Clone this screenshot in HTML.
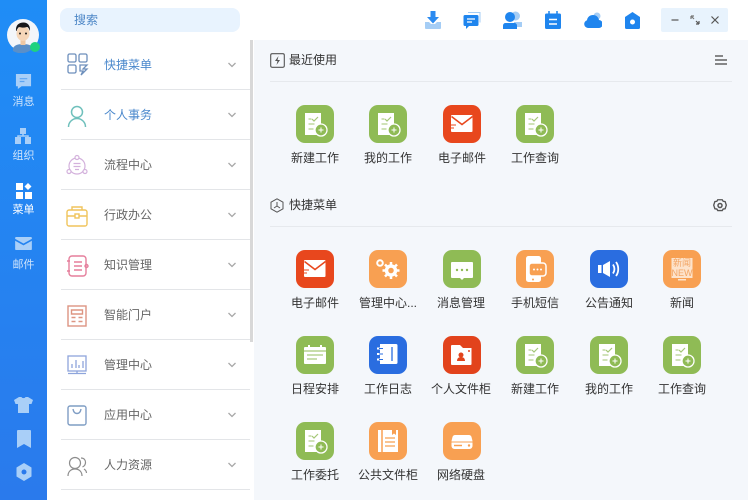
<!DOCTYPE html>
<html lang="zh">
<head>
<meta charset="utf-8">
<title>菜单</title>
<style>
html,body{margin:0;padding:0;width:748px;height:500px;overflow:hidden;background:#fff;}
body{position:relative;font-family:"Liberation Sans","Noto Sans CJK SC",sans-serif;font-size:12px;color:#333;filter:blur(.35px);}
.a{position:absolute;}
.side{left:0;top:0;width:47px;height:500px;background:linear-gradient(180deg,#1f8df6 0%,#2a7aec 100%);}
.sl{position:absolute;left:0;width:47px;text-align:center;font-size:11px;line-height:14px;color:#cfe4fb;}
.search{left:60px;top:8px;width:180px;height:24px;background:#e8f3fe;border-radius:8px;}
.search span{position:absolute;left:14px;top:0;line-height:24px;color:#4c86c6;}
.main{left:254px;top:40px;width:494px;height:460px;background:#f4f7fb;}
.scroll{left:250px;top:40px;width:3px;height:302px;background:#d8d8d8;}
.sep{position:absolute;left:61px;width:189px;height:1px;background:#e3e5e8;}
.mt{position:absolute;left:104px;line-height:18px;color:#666;white-space:nowrap;}
.mt.on{color:#4a88cc;}
.chev{position:absolute;left:227px;width:10px;height:6px;}
.mi{position:absolute;left:65px;width:24px;height:24px;}
.hline{position:absolute;left:270px;width:462px;height:1px;background:#e6e9ed;}
.h{position:absolute;left:289px;line-height:18px;color:#333;white-space:nowrap;}
.t{position:absolute;width:38px;height:38px;}
.l{position:absolute;width:74px;text-align:center;line-height:18px;color:#333;white-space:nowrap;}
.win{left:661px;top:8px;width:67px;height:24px;background:#e8f3fd;border-radius:2px;}
</style>
</head>
<body>
<svg width="0" height="0" style="position:absolute">
<defs>
<symbol id="task" viewBox="0 0 38 38">
<rect width="38" height="38" rx="9" fill="#8fbb55"/>
<path d="M9 8h16v22H9z" fill="#fff"/>
<path d="M12.500 14h3M12.500 19h6M12.500 24h5" stroke="#b4d18e" stroke-width="1.200" fill="none"/>
<path d="M16 14l2 2 4-4" stroke="#a4c776" stroke-width="1.200" fill="none"/>
<circle cx="25" cy="25" r="6" fill="#8fbb55" stroke="#fff" stroke-width="1.300"/>
<path d="M22.500 25h5M25 22.500v5" stroke="#fff" stroke-width="1"/>
</symbol>
<symbol id="mail" viewBox="0 0 38 38">
<rect width="38" height="38" rx="9" fill="#e8471d"/>
<path d="M9 10h19.500a1 1 0 0 1 1 1v15a1 1 0 0 1-1 1H9a1 1 0 0 1-1-1V11a1 1 0 0 1 1-1z" fill="#fff"/>
<path d="M8.500 11.500l10.500 8 10.500-8" stroke="#e8471d" stroke-width="1.500" fill="none"/>
<path d="M8 20h5M8 23h3" stroke="#e8471d" stroke-width="1"/>
</symbol>
<symbol id="gear" viewBox="0 0 38 38">
<rect width="38" height="38" rx="9" fill="#f8a052"/>
<circle cx="11" cy="13" r="2.800" fill="none" stroke="#fff" stroke-width="2"/>
<circle cx="22" cy="20.500" r="4.500" fill="none" stroke="#fff" stroke-width="3.500"/>
<path d="M22 12v3M22 26v3M13.500 20.500h3M27.500 20.500h3M16 14.500l2 2M26 24.500l2 2M16 26.500l2-2M26 16.500l2-2" stroke="#fff" stroke-width="2.500"/>
</symbol>
<symbol id="msg" viewBox="0 0 38 38">
<rect width="38" height="38" rx="9" fill="#8fbb55"/>
<path d="M9 12h20a1 1 0 0 1 1 1v14a1 1 0 0 1-1 1h-8l-2 2-2-2H9a1 1 0 0 1-1-1V13a1 1 0 0 1 1-1z" fill="#fff"/>
<circle cx="14" cy="20" r="1.200" fill="#8fbb55"/><circle cx="19" cy="20" r="1.200" fill="#8fbb55"/><circle cx="24" cy="20" r="1.200" fill="#8fbb55"/>
</symbol>
<symbol id="phone" viewBox="0 0 38 38">
<rect width="38" height="38" rx="9" fill="#f8a052"/>
<rect x="10" y="6" width="15" height="26" rx="2.500" fill="#fff"/>
<rect x="13" y="13" width="17" height="13" rx="3" fill="#f8a052" stroke="#fff" stroke-width="1.500"/>
<circle cx="18" cy="19.500" r="1" fill="#fff"/><circle cx="21.500" cy="19.500" r="1" fill="#fff"/><circle cx="25" cy="19.500" r="1" fill="#fff"/>
<circle cx="17" cy="29.500" r="1" fill="#f8a052"/>
</symbol>
<symbol id="sound" viewBox="0 0 38 38">
<rect width="38" height="38" rx="9" fill="#2a6de0"/>
<path d="M8 15h3.500v8H8zM13 15l7-4v16l-7-4z" fill="#fff"/>
<path d="M23 14.500c1.800 2.800 1.800 6.200 0 9M26 12c3 4 3 10 0 14" stroke="#fff" stroke-width="1.800" fill="none"/>
</symbol>
<symbol id="news" viewBox="0 0 38 38">
<rect width="38" height="38" rx="9" fill="#f8a052"/>
<rect x="8.500" y="8" width="21" height="20" fill="#fde3cb"/>
<path d="M15 29h8v1.500h-8z" fill="#fde3cb"/>
</symbol>
<symbol id="cal" viewBox="0 0 38 38">
<rect width="38" height="38" rx="9" fill="#8fbb55"/>
<path d="M9 11h20a1 1 0 0 1 1 1v15a1 1 0 0 1-1 1H9a1 1 0 0 1-1-1V12a1 1 0 0 1 1-1z" fill="#fff"/>
<path d="M13 9v5M25 9v5" stroke="#fff" stroke-width="2"/>
<path d="M8 15h22" stroke="#8fbb55" stroke-width="1"/>
<path d="M11 19h16M11 23h10" stroke="#a9cb7d" stroke-width="1.200"/>
</symbol>
<symbol id="log" viewBox="0 0 38 38">
<rect width="38" height="38" rx="9" fill="#2a6de0"/>
<path d="M11 8h16a1.500 1.500 0 0 1 1.500 1.500v17A1.500 1.500 0 0 1 27 28H11z" fill="#fff"/>
<path d="M8 12.500h6M8 18h6M8 23.500h6" stroke="#fff" stroke-width="2"/>
<path d="M10 12.500h4M10 18h4M10 23.500h4" stroke="#2a6de0" stroke-width="1"/>
<path d="M23 11v14" stroke="#2a6de0" stroke-width="1.300"/>
</symbol>
<symbol id="folder" viewBox="0 0 38 38">
<rect width="38" height="38" rx="9" fill="#e2431c"/>
<path d="M9 9h8l3 3h8.500v16a1 1 0 0 1-1 1H9a1 1 0 0 1-1-1V10a1 1 0 0 1 1-1z" fill="#fff"/>
<circle cx="18" cy="19" r="2.500" fill="#e2431c"/>
<path d="M14 25c0-3 2-4 4-4s4 1 4 4z" fill="#e2431c"/>
<circle cx="26" cy="15" r="1" fill="#e2431c"/>
</symbol>
<symbol id="book" viewBox="0 0 38 38">
<rect width="38" height="38" rx="9" fill="#f8a052"/>
<path d="M9 8h20v22H9z" fill="#fff"/>
<path d="M13 8v22" stroke="#f8a052" stroke-width="1.500"/>
<path d="M16 16h10M16 20h10M16 24h10" stroke="#f8a052" stroke-width="1.300"/>
<path d="M23 8h4v5l-2-1.500-2 1.500z" fill="#f8a052"/>
</symbol>
<symbol id="disk" viewBox="0 0 38 38">
<rect width="38" height="38" rx="9" fill="#f8a052"/>
<path d="M12 13h14c1 0 2 .5 2.500 2l1 4v5a3 3 0 0 1-3 3h-15a3 3 0 0 1-3-3v-5l1-4c.5-1.500 1.500-2 2.500-2z" fill="#fff"/>
<path d="M8.500 20h21" stroke="#f8a052" stroke-width="1"/>
<path d="M11 23.500h8" stroke="#f8a052" stroke-width="1.500"/>
<circle cx="26" cy="23.500" r="1.200" fill="#f8a052"/>
</symbol>
<symbol id="chev" viewBox="0 0 10 6"><path d="M1.500 1l3.500 3.500L8.500 1" fill="none" stroke="#a8a8a8" stroke-width="1.300"/></symbol>
</defs>
</svg>

<div class="a main"></div>
<div class="a scroll"></div>

<!-- left rail -->
<div class="a side"></div>
<svg class="a" style="left:7px;top:19px" width="34" height="34" viewBox="0 0 34 34">
<circle cx="16" cy="16" r="16" fill="#f3f6fa"/>
<path d="M6 29c2-3 5-4 10-4s8 1 10 4a16 16 0 0 1-20 3z" fill="#5a8fc8"/>
<rect x="13.500" y="20" width="5" height="6" fill="#eec8a4"/>
<ellipse cx="16" cy="14.500" rx="6.500" ry="7.500" fill="#f5d6b8"/>
<path d="M9 12C8.500 6 12 3.500 16.500 3.500c4.500 0 7 3.500 6.500 8.500-1-2.500-2-4-3-4-3 .8-6 .8-8 0-1 1-2 2-2.500 4z" fill="#17181c"/>
<circle cx="13" cy="14.500" r="1" fill="#222"/><circle cx="19" cy="14.500" r="1" fill="#222"/>
<circle cx="28" cy="28" r="5" fill="#1fd27f"/>
</svg>
<svg class="a" style="left:15px;top:73px" width="17" height="17" viewBox="0 0 18 18"><path d="M1 1h16v13H7l-4 3v-3H1z" fill="#a9cff8"/><path d="M5 6h8M5 9h5" stroke="#5ea5f3" stroke-width="1.200"/></svg>
<div class="sl" style="top:95px">消息</div>
<svg class="a" style="left:14px;top:127px" width="18" height="18" viewBox="0 0 18 18"><path d="M6 1h6v6H6zM1 10h6v7H1zM11 10h6v7h-6z" fill="#a9cff8"/><path d="M9 6v3M4 11V9h10v2" stroke="#a9cff8" stroke-width="1.500" fill="none"/></svg>
<div class="sl" style="top:149px">组织</div>
<svg class="a" style="left:15px;top:182px" width="17" height="17" viewBox="0 0 17 17"><path d="M1 1h7v7H1zM1 10h7v7H1zM10 10h7v7h-7z" fill="#fff"/><path d="M13 1l3.500 3.500L13 8 9.500 4.500z" fill="#fff"/></svg>
<div class="sl" style="top:203px;color:#fff">菜单</div>
<svg class="a" style="left:15px;top:237px" width="17" height="13" viewBox="0 0 18 14"><path d="M1 0h16a1 1 0 0 1 1 1v1L9 7 0 2V1a1 1 0 0 1 1-1zM0 4l9 5 9-5v9a1 1 0 0 1-1 1H1a1 1 0 0 1-1-1z" fill="#a9cff8"/></svg>
<div class="sl" style="top:258px">邮件</div>
<svg class="a" style="left:14px;top:397px" width="19" height="16" viewBox="0 0 19 16"><path d="M5 0h2.500c.5 1.500 3.500 1.500 4 0H14l5 3-1.500 4H15v9H4V7H1.500L0 3z" fill="#a9cff8"/></svg>
<svg class="a" style="left:17px;top:430px" width="14" height="18" viewBox="0 0 14 18"><path d="M1 0h12a1 1 0 0 1 1 1v17l-7-4-7 4V1a1 1 0 0 1 1-1z" fill="#a9cff8"/></svg>
<svg class="a" style="left:16px;top:463px" width="16" height="18" viewBox="0 0 16 18"><path d="M8 0l7.500 4.500v9L8 18 .5 13.500v-9z" fill="#a9cff8"/><circle cx="8" cy="9" r="2.500" fill="#2a7aec"/></svg>

<!-- search -->
<div class="a search"><span>搜索</span></div>

<!-- menu -->
<svg class="mi" style="top:52px" viewBox="0 0 24 24" fill="none" stroke="#6d8fbc" stroke-width="1.300"><rect x="3" y="2" width="8" height="8" rx="1.500"/><rect x="14" y="2" width="8" height="8" rx="1.500"/><rect x="3" y="13" width="8" height="8" rx="1.500"/><path d="M15 13h7l-4 4h4l-6 6 2-4h-3z"/></svg>
<div class="mt on" style="top:56px">快捷菜单</div>
<svg class="chev" style="top:62px"><use href="#chev"/></svg>
<div class="sep" style="top:89px"></div>

<svg class="mi" style="top:104px" viewBox="0 0 24 24" fill="none" stroke="#6fc0bc" stroke-width="1.500"><circle cx="12" cy="8" r="5.500"/><path d="M3.500 23c0-5 4-8.500 8.500-8.500s8.500 3.500 8.500 8.500"/></svg>
<div class="mt on" style="top:106px">个人事务</div>
<svg class="chev" style="top:112px"><use href="#chev"/></svg>
<div class="sep" style="top:139px"></div>

<svg class="mi" style="top:154px" viewBox="0 0 24 24" fill="none" stroke="#d3b1dc" stroke-width="1.200"><circle cx="12" cy="12" r="8"/><circle cx="12" cy="3.500" r="2" fill="#fff"/><circle cx="4" cy="17.500" r="2" fill="#fff"/><circle cx="20" cy="17.500" r="2" fill="#fff"/><path d="M8.500 9.500h7M8.500 12.500h7M10 15.500h4"/></svg>
<div class="mt" style="top:156px">流程中心</div>
<svg class="chev" style="top:162px"><use href="#chev"/></svg>
<div class="sep" style="top:189px"></div>

<svg class="mi" style="top:204px" viewBox="0 0 24 24" fill="none" stroke="#f0c45c" stroke-width="1.400"><rect x="2" y="6" width="20" height="16" rx="2"/><path d="M7 6V3h10v3M2 12h20"/><rect x="10" y="10" width="4" height="4" fill="#fff"/></svg>
<div class="mt" style="top:206px">行政办公</div>
<svg class="chev" style="top:212px"><use href="#chev"/></svg>
<div class="sep" style="top:239px"></div>

<svg class="mi" style="top:254px" viewBox="0 0 24 24" fill="none" stroke="#e57f9c" stroke-width="1.400"><rect x="4" y="2" width="17" height="20" rx="3"/><path d="M9 8h8M9 12h8M9 16h8M2 7h3M2 17h3"/><circle cx="21.500" cy="12" r="1.500"/></svg>
<div class="mt" style="top:256px">知识管理</div>
<svg class="chev" style="top:262px"><use href="#chev"/></svg>
<div class="sep" style="top:289px"></div>

<svg class="mi" style="top:304px" viewBox="0 0 24 24" fill="none" stroke="#dd9582" stroke-width="1.400"><rect x="3" y="2" width="18" height="20"/><path d="M6.500 6h11v4h-11zM6.500 13.500h4M6.500 17.500h4M13.500 13.500h4M13.500 17.500h4"/></svg>
<div class="mt" style="top:306px">智能门户</div>
<svg class="chev" style="top:312px"><use href="#chev"/></svg>
<div class="sep" style="top:339px"></div>

<svg class="mi" style="top:354px" viewBox="0 0 24 24" fill="none" stroke="#8ea5dc" stroke-width="1.300"><rect x="3" y="2" width="18" height="15"/><path d="M7 14v-4M11 14V6M14 14v-3M18 14V7M3 19.500h18M12 17v2.500"/></svg>
<div class="mt" style="top:356px">管理中心</div>
<svg class="chev" style="top:362px"><use href="#chev"/></svg>
<div class="sep" style="top:389px"></div>

<svg class="mi" style="top:404px" viewBox="0 0 24 24" fill="none" stroke="#7f9dc4" stroke-width="1.400"><rect x="3" y="2" width="18" height="19" rx="2"/><path d="M8 5c.5 3 2 4.500 4 4.500S15.500 8 16 5"/></svg>
<div class="mt" style="top:406px">应用中心</div>
<svg class="chev" style="top:412px"><use href="#chev"/></svg>
<div class="sep" style="top:439px"></div>

<svg class="mi" style="top:454px" viewBox="0 0 24 24" fill="none" stroke="#8d8d8d" stroke-width="1.200"><circle cx="10" cy="9" r="5.500"/><path d="M3 22c0-4 2.500-7 7-7s7 3 7 7M16 4c3 0 4.500 2 4.500 4.500 0 2-1 3.500-3 4.500M19 15c1.500 1 2.500 2 2.500 4"/></svg>
<div class="mt" style="top:456px">人力资源</div>
<svg class="chev" style="top:462px"><use href="#chev"/></svg>
<div class="sep" style="top:489px"></div>

<!-- top toolbar -->
<svg class="a" style="left:424px;top:11px" width="18" height="18" viewBox="0 0 18 18"><path d="M1 11h4l2 2h4l2-2h4v6a1 1 0 0 1-1 1H2a1 1 0 0 1-1-1z" fill="#a5cdf5"/><path d="M6.500 0h5v6H15l-6 6.500L3 6h3.500z" fill="#2c8bf0"/></svg>
<svg class="a" style="left:463px;top:11px" width="18" height="18" viewBox="0 0 18 18"><path d="M5 1.500h12v10" fill="none" stroke="#a5cdf5" stroke-width="1"/><path d="M2 4h12a1.500 1.500 0 0 1 1.500 1.500v8A1.500 1.500 0 0 1 14 15H6l-3 3v-3H2A1.500 1.500 0 0 1 .5 13.500v-8A1.500 1.500 0 0 1 2 4z" fill="#1f85ee"/><path d="M4 8h8M4 11h5" stroke="#fff" stroke-width="1.300"/></svg>
<svg class="a" style="left:503px;top:11px" width="19" height="18" viewBox="0 0 19 18"><circle cx="12.500" cy="5" r="4.500" fill="#a5cdf5"/><path d="M11 11h8v5h-8z" fill="#a5cdf5"/><circle cx="7" cy="6" r="5" fill="#1f85ee"/><path d="M0 18v-3.500A2.500 2.500 0 0 1 2.500 12h9a2.500 2.500 0 0 1 2.500 2.500V18z" fill="#1f85ee"/></svg>
<svg class="a" style="left:545px;top:11px" width="16" height="18" viewBox="0 0 16 18"><path d="M1.500 2.500h13A1.500 1.500 0 0 1 16 4v12.500a1.500 1.500 0 0 1-1.500 1.500h-13A1.500 1.500 0 0 1 0 16.500V4a1.500 1.500 0 0 1 1.500-1.500z" fill="#1f85ee"/><path d="M4 0v4M12 0v4" stroke="#1f85ee" stroke-width="1.500"/><path d="M4 8.500h8M4 13h8" stroke="#fff" stroke-width="1.500"/></svg>
<svg class="a" style="left:584px;top:12px" width="18" height="16" viewBox="0 0 18 16"><circle cx="13" cy="4" r="3.500" fill="#a5cdf5"/><path d="M4 16a4 4 0 0 1-1-7.800C3.500 5 6 3 9 3c3 0 5.500 2 6 5a4 4 0 0 1-.5 8z" fill="#1f85ee"/></svg>
<svg class="a" style="left:625px;top:12px" width="15" height="17" viewBox="0 0 15 17"><path d="M7.500 0L15 5v10.500a1.500 1.500 0 0 1-1.500 1.500h-12A1.500 1.500 0 0 1 0 15.500V5z" fill="#1f85ee"/><circle cx="7.500" cy="10" r="2.500" fill="#fff"/></svg>
<div class="a win"></div>
<svg class="a" style="left:670px;top:14px" width="52" height="12" viewBox="0 0 52 12" fill="none" stroke="#555" stroke-width="1.200"><path d="M1.500 6h7"/><path d="M21 2l3 3M21 2h3M21 2v3" stroke="#777"/><path d="M29 10l-3-3M29 10h-3M29 10V7" stroke="#555"/><path d="M41.500 2.500l7 7M48.500 2.500l-7 7"/></svg>

<!-- section 1 -->
<svg class="a" style="left:270px;top:53px" width="15" height="15" viewBox="0 0 15 15"><rect x=".7" y=".7" width="13.600" height="13.600" rx="1.500" fill="none" stroke="#555" stroke-width="1.100"/><path d="M8.500 3L5 8h2.500L6.500 12 10 7H7.500z" fill="#555"/></svg>
<div class="h" style="top:51px">最近使用</div>
<svg class="a" style="left:714px;top:55px" width="13" height="10" viewBox="0 0 13 10" stroke="#444" stroke-width="1.200"><path d="M1 1h8M1 5h12M1 9h12"/></svg>
<div class="hline" style="top:81px"></div>

<svg class="t" style="left:296px;top:105px"><use href="#task"/></svg><div class="l" style="left:278px;top:149px">新建工作</div>
<svg class="t" style="left:369px;top:105px"><use href="#task"/></svg><div class="l" style="left:351px;top:149px">我的工作</div>
<svg class="t" style="left:443px;top:105px"><use href="#mail"/></svg><div class="l" style="left:425px;top:149px">电子邮件</div>
<svg class="t" style="left:516px;top:105px"><use href="#task"/></svg><div class="l" style="left:498px;top:149px">工作查询</div>

<!-- section 2 -->
<svg class="a" style="left:270px;top:198px" width="14" height="15" viewBox="0 0 14 15" fill="none" stroke="#555" stroke-width="1"><path d="M7 .8l6 3.400v6.600l-6 3.400-6-3.400V4.200z"/><path d="M7 4v4M7 8l-3 2M7 8l3 2"/></svg>
<div class="h" style="top:196px">快捷菜单</div>
<svg class="a" style="left:713px;top:198px" width="14" height="15" viewBox="0 0 14 15" fill="none" stroke="#555" stroke-width="1.500"><path d="M4.500 1.500h5l1 1.700 2.200.3L14 7.500l-1.300 4-2.200.3-1 1.700h-5l-1-1.700-2.200-.3L0 7.500l1.300-4 2.200-.3z" transform="translate(.7 .4) scale(.9)"/><circle cx="7" cy="7.500" r="2"/></svg>
<div class="hline" style="top:226px"></div>

<svg class="t" style="left:296px;top:250px"><use href="#mail"/></svg><div class="l" style="left:278px;top:294px">电子邮件</div>
<svg class="t" style="left:369px;top:250px"><use href="#gear"/></svg><div class="l" style="left:351px;top:294px">管理中心...</div>
<svg class="t" style="left:443px;top:250px"><use href="#msg"/></svg><div class="l" style="left:424px;top:294px">消息管理</div>
<svg class="t" style="left:516px;top:250px"><use href="#phone"/></svg><div class="l" style="left:498px;top:294px">手机短信</div>
<svg class="t" style="left:590px;top:250px"><use href="#sound"/></svg><div class="l" style="left:572px;top:294px">公告通知</div>
<svg class="t" style="left:663px;top:250px"><use href="#news"/></svg>
<div class="a" style="left:671px;top:258px;width:22px;text-align:center;font-size:9px;line-height:10px;color:#f3a564;white-space:nowrap;">新闻<br>NEW</div>
<div class="l" style="left:645px;top:294px">新闻</div>

<svg class="t" style="left:296px;top:336px"><use href="#cal"/></svg><div class="l" style="left:278px;top:380px">日程安排</div>
<svg class="t" style="left:369px;top:336px"><use href="#log"/></svg><div class="l" style="left:351px;top:380px">工作日志</div>
<svg class="t" style="left:443px;top:336px"><use href="#folder"/></svg><div class="l" style="left:424px;top:380px">个人文件柜</div>
<svg class="t" style="left:516px;top:336px"><use href="#task"/></svg><div class="l" style="left:498px;top:380px">新建工作</div>
<svg class="t" style="left:590px;top:336px"><use href="#task"/></svg><div class="l" style="left:572px;top:380px">我的工作</div>
<svg class="t" style="left:663px;top:336px"><use href="#task"/></svg><div class="l" style="left:645px;top:380px">工作查询</div>

<svg class="t" style="left:296px;top:422px"><use href="#task"/></svg><div class="l" style="left:278px;top:466px">工作委托</div>
<svg class="t" style="left:369px;top:422px"><use href="#book"/></svg><div class="l" style="left:351px;top:466px">公共文件柜</div>
<svg class="t" style="left:443px;top:422px"><use href="#disk"/></svg><div class="l" style="left:424px;top:466px">网络硬盘</div>
</body>
</html>
